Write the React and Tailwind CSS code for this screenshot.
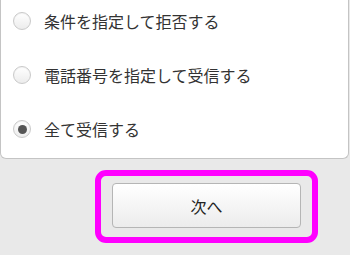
export default function App() {
  const options = [
    { label: '条件を指定して拒否する', checked: false },
    { label: '電話番号を指定して受信する', checked: false },
    { label: '全て受信する', checked: true },
  ];

  return (
    <div
      className="w-[350px] h-[255px] overflow-hidden bg-[#e9e9e9] text-[#333]"
      style={{ fontFamily: '"Noto Sans CJK JP", "Noto Sans", sans-serif' }}
    >
      <div className="h-[159px] w-[349px] bg-white border-x border-b border-[#c4c4c4] rounded-b-md flex flex-col gap-[12px]">
        {options.map((o) => (
          <div key={o.label} className="h-[42px] flex items-center pl-[12px]">
            <span className="w-[18px] h-[18px] rounded-full border border-[#c9c9c9] bg-gradient-to-b from-white to-[#ececec] flex items-center justify-center shadow-[inset_0_1px_1px_rgba(0,0,0,0.05)]">
              {o.checked && <span className="w-[9px] h-[9px] rounded-full bg-[#555]" />}
            </span>
            <span className="ml-[13px] text-[16px] leading-none -mt-[1px]">{o.label}</span>
          </div>
        ))}
      </div>
      <div className="flex pl-[95px] pt-[11px]">
        <div className="w-[223px] h-[73px] rounded-[11px] border-[6px] border-[#ff00ff] pl-[11px] pt-[7px]">
          <button className="w-[189px] h-[45px] rounded-[4px] border border-[#b5b5b5] bg-gradient-to-b from-white to-[#ececec] text-[16px] text-[#222] flex items-center justify-center">
            次へ
          </button>
        </div>
      </div>
    </div>
  );
}
